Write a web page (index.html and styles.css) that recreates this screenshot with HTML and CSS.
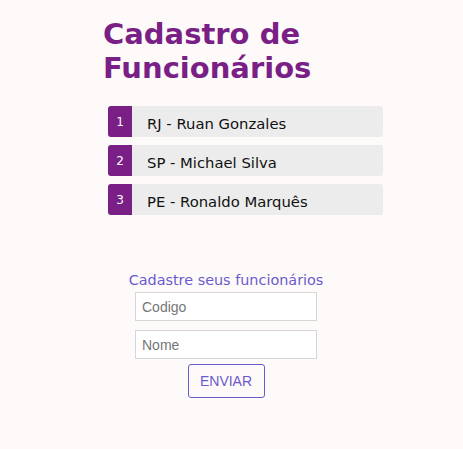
FILE: index.html
```html
<!DOCTYPE html>
<html lang="pt-BR">
<head>
<meta charset="utf-8">
<title>Cadastro de Funcionários</title>
<link rel="stylesheet" href="styles.css">
</head>
<body>
  <main class="page">
    <h1 class="title">Cadastro de<br>Funcionários</h1>
    <ul class="list">
      <li class="item"><span class="num">1</span><span class="name">RJ - Ruan Gonzales</span></li>
      <li class="item"><span class="num">2</span><span class="name">SP - Michael Silva</span></li>
      <li class="item"><span class="num">3</span><span class="name">PE - Ronaldo Marquês</span></li>
    </ul>
    <form class="form">
      <p class="form-label">Cadastre seus funcionários</p>
      <input class="field" type="text" placeholder="Codigo">
      <input class="field" type="text" placeholder="Nome">
      <button class="btn" type="button">ENVIAR</button>
    </form>
  </main>
</body>
</html>
```
FILE: styles.css
```css
html, body {
  margin: 0;
  padding: 0;
  background: #fffafa;
}
body {
  font-family: "DejaVu Sans", Verdana, sans-serif;
}
.page {
  display: flex;
  flex-direction: column;
  padding-top: 17px;
}
.title {
  margin: 0 0 0 103px;
  font-size: 29px;
  line-height: 34px;
  font-weight: bold;
  color: #7a1f85;
}
.list {
  list-style: none;
  margin: 21px 0 0 108px;
  padding: 0;
  width: 275px;
  display: flex;
  flex-direction: column;
  gap: 8px;
}
.item {
  display: flex;
  height: 31px;
  background: #ececec;
  border-radius: 3px;
  overflow: hidden;
  align-items: stretch;
}
.num {
  width: 24px;
  flex: none;
  background: #7a1f85;
  color: #fff;
  font-size: 12px;
  display: flex;
  align-items: center;
  justify-content: center;
}
.name {
  display: flex;
  align-items: center;
  padding-left: 15px;
  padding-top: 3px;
  font-size: 14.8px;
  color: #111;
}
.form {
  margin: 54px 0 0 0;
  width: 452px;
  display: flex;
  flex-direction: column;
  align-items: center;
}
.form-label {
  margin: 0;
  font-size: 14.4px;
  line-height: 22px;
  color: #6a5acd;
}
.field {
  margin-top: 1px;
  width: 182px;
  height: 29px;
  box-sizing: border-box;
  border: 1px solid #d6d6d6;
  background: #fff;
  padding: 0 6px;
  font-family: "Liberation Sans", Arial, sans-serif;
  font-size: 14px;
}
.field + .field {
  margin-top: 9px;
}
.field::placeholder {
  color: #767676;
}
.btn {
  margin-top: 5px;
  width: 77px;
  height: 34px;
  border: 1px solid #6a5acd;
  border-radius: 3px;
  background: transparent;
  color: #6a5acd;
  font-family: "Liberation Sans", Arial, sans-serif;
  font-size: 14px;
}
```
